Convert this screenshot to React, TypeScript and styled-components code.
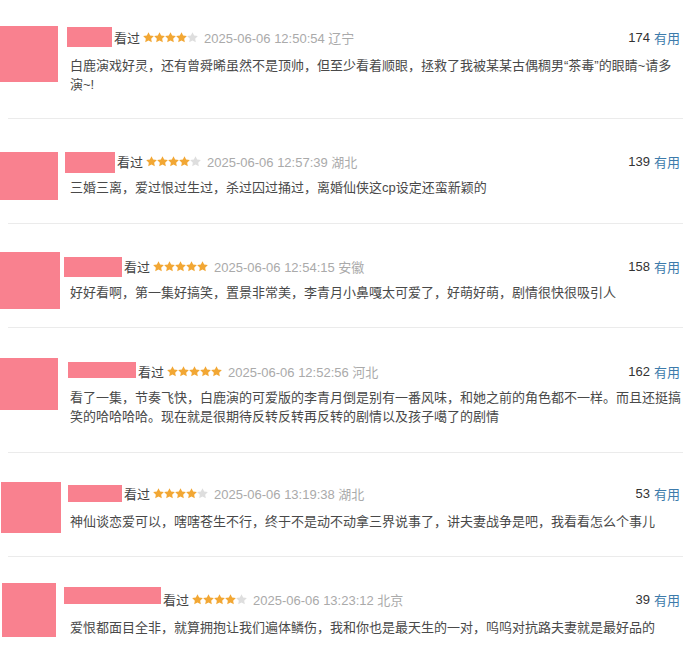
import React from 'react';
import styled, { createGlobalStyle } from 'styled-components';

const GlobalStyle = createGlobalStyle`
  html, body {
    margin: 0;
    padding: 0;
    background: #ffffff;
  }
  body {
    font-family: "Liberation Sans", Arial, "Noto Sans CJK SC", sans-serif;
    font-size: 13px;
    color: #494949;
  }
`;

/**
 *
 *  STYLE
 */
const List = styled.div`
  width: 700px;
  display: flex;
  flex-direction: column;
`;

const Item = styled.div<{ $pad: number; $height: number }>`
  box-sizing: border-box;
  height: ${(p) => p.$height}px;
  padding-top: ${(p) => p.$pad}px;
  display: flex;
  flex-direction: column;
`;

const Row = styled.div`
  display: flex;
  align-items: flex-start;
`;

const AvatarCol = styled.div`
  width: 64px;
  flex-shrink: 0;
`;

const Avatar = styled.div<{ $left: number; $w: number; $h: number }>`
  margin-left: ${(p) => p.$left}px;
  width: ${(p) => p.$w}px;
  height: ${(p) => p.$h}px;
  background: #f9818f;
`;

const Body = styled.div`
  width: 616px;
  display: flex;
  flex-direction: column;
`;

const Header = styled.div<{ $top: number; $h: number }>`
  margin-top: ${(p) => p.$top}px;
  height: ${(p) => p.$h}px;
  display: flex;
  align-items: center;
  white-space: nowrap;
`;

const Name = styled.span<{ $left: number; $w: number; $h: number }>`
  align-self: flex-start;
  margin-left: ${(p) => p.$left}px;
  width: ${(p) => p.$w}px;
  height: ${(p) => p.$h}px;
  background: #f9818f;
`;

const Watched = styled.span`
  margin-left: 2px;
  color: #444;
  font-family: "Noto Sans CJK SC", sans-serif;
`;

const Stars = styled.span`
  display: inline-flex;
  margin-left: 3px;
`;

const Time = styled.span`
  margin-left: 6px;
  color: #aaa;
`;

const Votes = styled.span`
  margin-left: auto;
  color: #333;
`;

const Useful = styled.span`
  margin-left: 4px;
  color: #3d7bab;
  font-family: "Noto Sans CJK SC", sans-serif;
`;

const Text = styled.p<{ $gap: number }>`
  margin: ${(p) => p.$gap}px 0 0;
  padding-left: 6px;
  width: 612px;
  line-height: 19px;
  color: #494949;
`;

const Divider = styled.div`
  margin-top: auto;
  margin-left: 8px;
  width: 675px;
  height: 1px;
  background: #ebebeb;
`;

/**
 *
 *  TYPES
 */
interface Review {
  pad: number;
  height: number;
  avatar: { left: number; w: number; h: number };
  name: { left: number; top: number; w: number; h: number; hh?: number };
  gap: number;
  stars: number;
  time: string;
  loc: string;
  votes: number;
  text: string;
  last?: boolean;
}

const reviews: Review[] = [
  {
    pad: 26,
    height: 119,
    avatar: { left: 0, w: 58, h: 56 },
    name: { left: 3, top: 1, w: 45, h: 20 },
    gap: 9,
    stars: 4,
    time: '2025-06-06 12:50:54',
    loc: '辽宁',
    votes: 174,
    text: '白鹿演戏好灵，还有曾舜晞虽然不是顶帅，但至少看着顺眼，拯救了我被某某古偶稠男“茶毒”的眼睛~请多演~!',
  },
  {
    pad: 33,
    height: 105,
    avatar: { left: 0, w: 58, h: 48 },
    name: { left: 1, top: 0, w: 50, h: 21, hh: 19 },
    gap: 7,
    stars: 4,
    time: '2025-06-06 12:57:39',
    loc: '湖北',
    votes: 139,
    text: '三婚三离，爱过恨过生过，杀过囚过捅过，离婚仙侠这cp设定还蛮新颖的',
  },
  {
    pad: 28,
    height: 104,
    avatar: { left: 0, w: 60, h: 57 },
    name: { left: 0, top: 5, w: 58, h: 20, hh: 18 },
    gap: 8,
    stars: 5,
    time: '2025-06-06 12:54:15',
    loc: '安徽',
    votes: 158,
    text: '好好看啊，第一集好搞笑，置景非常美，李青月小鼻嘎太可爱了，好萌好萌，剧情很快很吸引人',
  },
  {
    pad: 30,
    height: 125,
    avatar: { left: 0, w: 58, h: 52 },
    name: { left: 4, top: 4, w: 68, h: 16, hh: 18 },
    gap: 8,
    stars: 5,
    time: '2025-06-06 12:52:56',
    loc: '河北',
    votes: 162,
    text: '看了一集，节奏飞快，白鹿演的可爱版的李青月倒是别有一番风味，和她之前的角色都不一样。而且还挺搞笑的哈哈哈哈。现在就是很期待反转反转再反转的剧情以及孩子噶了的剧情',
  },
  {
    pad: 29,
    height: 104,
    avatar: { left: 1, w: 60, h: 51 },
    name: { left: 4, top: 3, w: 54, h: 17 },
    gap: 10,
    stars: 4,
    time: '2025-06-06 13:19:38',
    loc: '湖北',
    votes: 53,
    text: '神仙谈恋爱可以，嗐嗐苍生不行，终于不是动不动拿三界说事了，讲夫妻战争是吧，我看看怎么个事儿',
  },
  {
    pad: 26,
    height: 98,
    avatar: { left: 2, w: 54, h: 54 },
    name: { left: 0, top: 4, w: 97, h: 17, hh: 24 },
    gap: 7,
    stars: 4,
    time: '2025-06-06 13:23:12',
    loc: '北京',
    votes: 39,
    text: '爱恨都面目全非，就算拥抱让我们遍体鳞伤，我和你也是最天生的一对，呜呜对抗路夫妻就是最好品的',
    last: true,
  },
];

const Star = ({ on }: { on: boolean }) => (
  <svg width="11" height="11" viewBox="0 0 24 24">
    <path
      d="M12 0.3l3.6 7.4 8.1 1.1-5.9 5.7 1.4 8.1L12 18.8l-7.2 3.8 1.4-8.1L0.3 8.8l8.1-1.1z"
      fill={on ? '#f2a734' : '#dedede'}
    />
  </svg>
);

const ReviewItem = ({ r }: { r: Review }) => (
  <Item $pad={r.pad} $height={r.height}>
    <Row>
      <AvatarCol>
        <Avatar $left={r.avatar.left} $w={r.avatar.w} $h={r.avatar.h} />
      </AvatarCol>
      <Body>
        <Header $top={r.name.top} $h={r.name.hh ?? r.name.h}>
          <Name $left={r.name.left} $w={r.name.w} $h={r.name.h} />
          <Watched>看过</Watched>
          <Stars>
            {[0, 1, 2, 3, 4].map((i) => (
              <Star key={i} on={i < r.stars} />
            ))}
          </Stars>
          <Time>
            {r.time} {r.loc}
          </Time>
          <Votes>{r.votes}</Votes>
          <Useful>有用</Useful>
        </Header>
        <Text $gap={r.gap}>{r.text}</Text>
      </Body>
    </Row>
    {!r.last && <Divider />}
  </Item>
);

export default function App() {
  return (
    <>
      <GlobalStyle />
      <List>
        {reviews.map((r, i) => (
          <ReviewItem key={i} r={r} />
        ))}
      </List>
    </>
  );
}
